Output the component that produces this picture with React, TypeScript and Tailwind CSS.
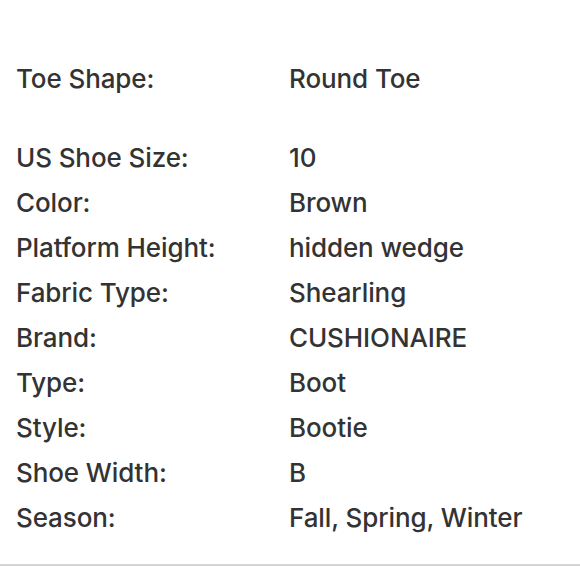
import React from 'react';

const rows: [string, string][] = [
  ['US Shoe Size:', '10'],
  ['Color:', 'Brown'],
  ['Platform Height:', 'hidden wedge'],
  ['Fabric Type:', 'Shearling'],
  ['Brand:', 'CUSHIONAIRE'],
  ['Type:', 'Boot'],
  ['Style:', 'Bootie'],
  ['Shoe Width:', 'B'],
  ['Season:', 'Fall, Spring, Winter'],
];

function Row({ label, value }: { label: string; value: string }) {
  return (
    <div className="flex h-[45px] items-center">
      <div className="w-[273px] shrink-0">{label}</div>
      <div>{value}</div>
    </div>
  );
}

export default function App() {
  return (
    <div
      className="h-[580px] w-[580px] bg-white text-[#333333] text-[26px] font-medium tracking-[-0.1px]"
      style={{ fontFamily: 'Inter, "Noto Sans", sans-serif' }}
    >
      <div className="px-4 pt-[56px]">
        <Row label="Toe Shape:" value="Round Toe" />
        <div className="h-[34px]" />
        {rows.map(([l, v]) => (
          <Row key={l} label={l} value={v} />
        ))}
      </div>
      <div className="mt-[24px] h-[2px] bg-[#d4d4d4]" />
    </div>
  );
}
